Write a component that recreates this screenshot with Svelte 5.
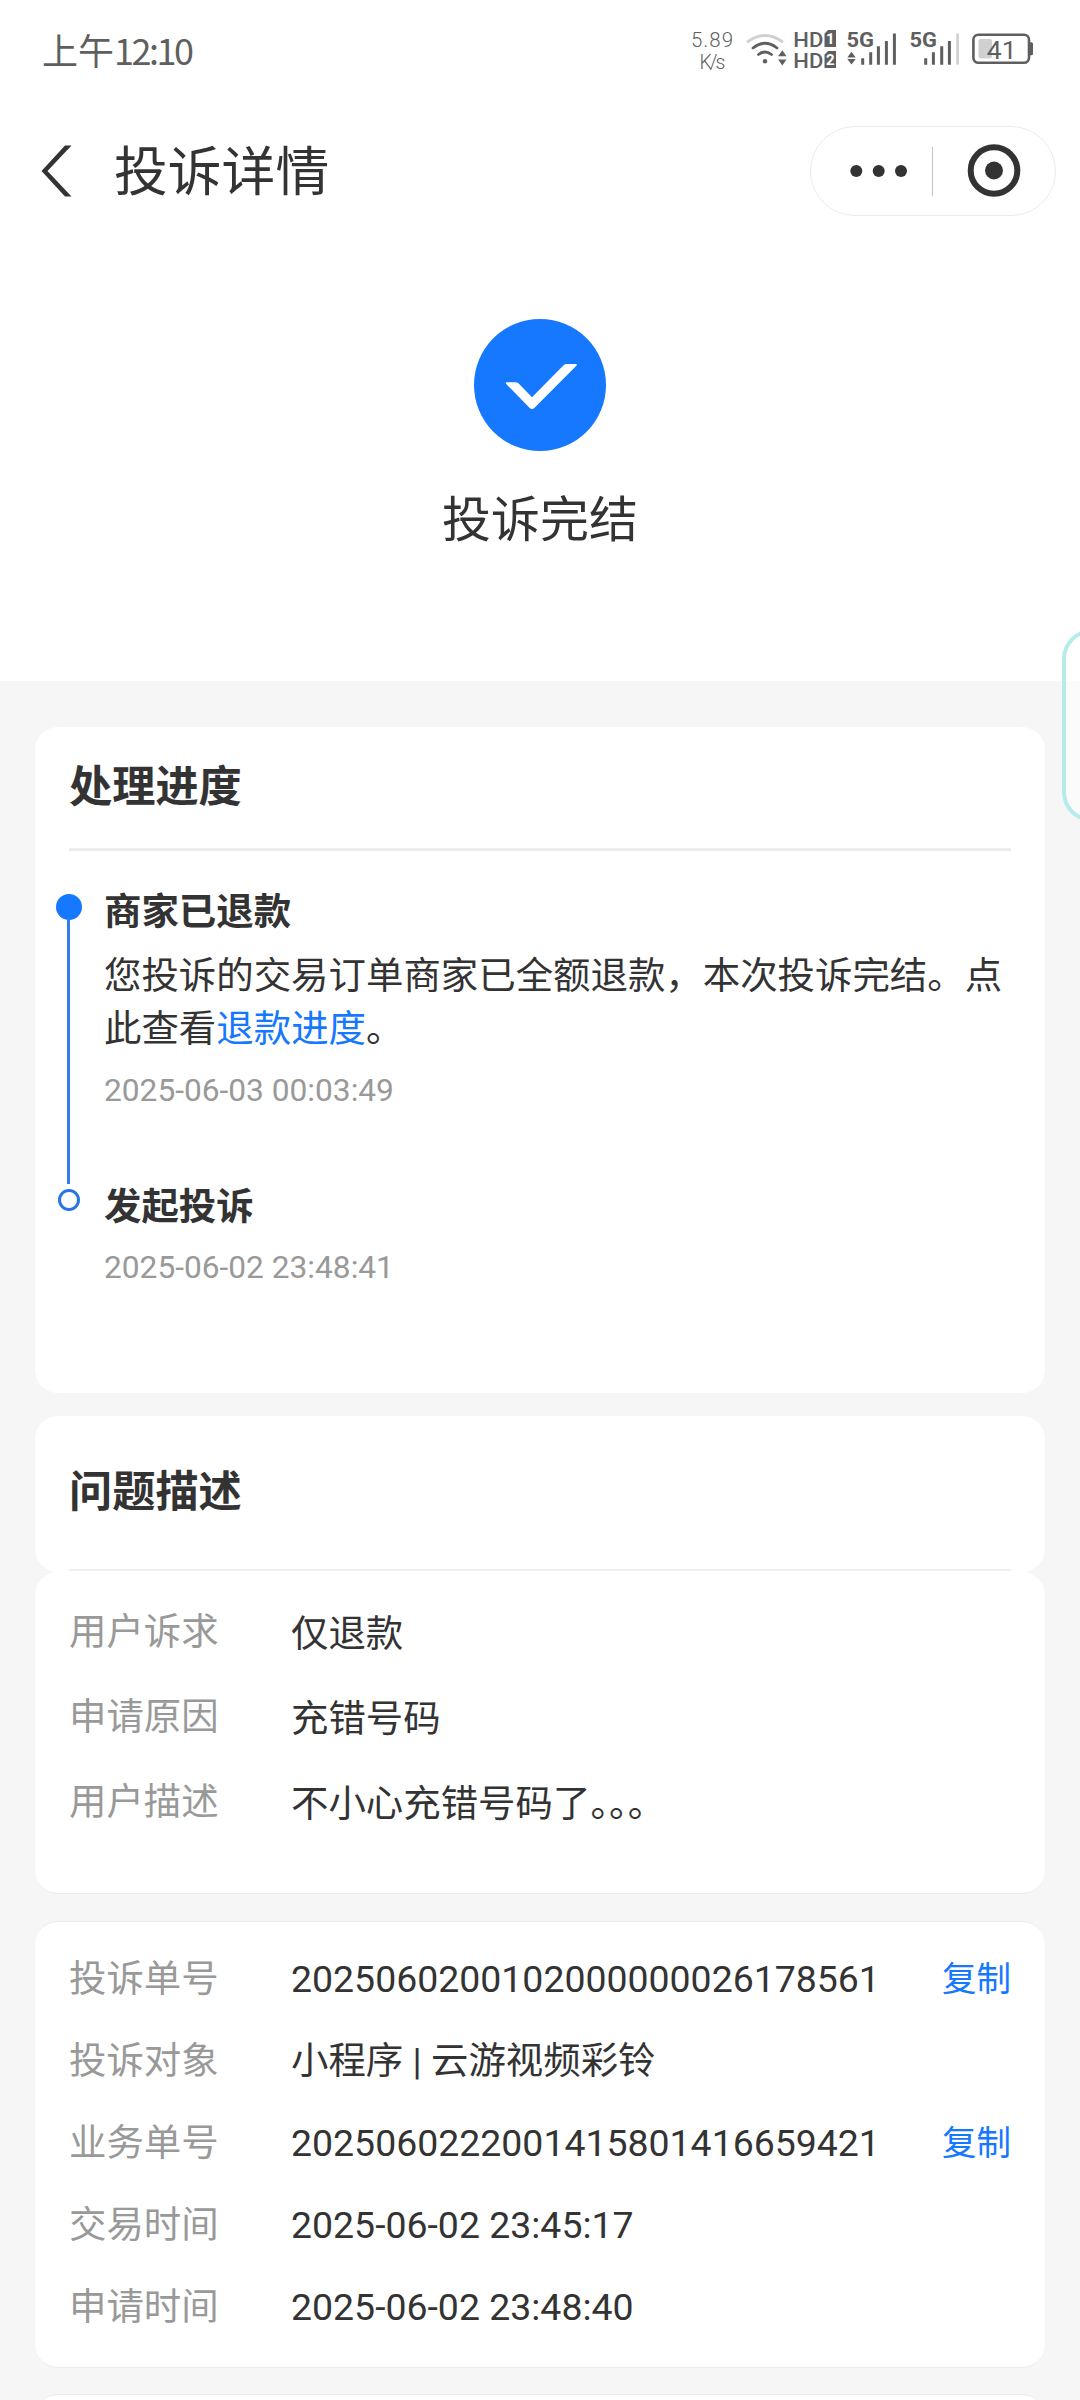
<script lang="ts">
	type Row = { label: string; value: string; copy?: boolean };

	const problem: Row[] = [
		{ label: '用户诉求', value: '仅退款' },
		{ label: '申请原因', value: '充错号码' },
		{ label: '用户描述', value: '不小心充错号码了。。。' }
	];

	const order: Row[] = [
		{ label: '投诉单号', value: '2025060200102000000026178561', copy: true },
		{ label: '投诉对象', value: '小程序 | 云游视频彩铃' },
		{ label: '业务单号', value: '2025060222001415801416659421', copy: true },
		{ label: '交易时间', value: '2025-06-02 23:45:17' },
		{ label: '申请时间', value: '2025-06-02 23:48:40' }
	];

	function copyText(text: string) {
		navigator.clipboard?.writeText(text);
	}
</script>

<div class="page">
	<header class="top">
		<div class="status-bar">
			<div class="clock">上午<span>12:10</span></div>
			<svg class="status-icons" width="350" height="50" viewBox="690 25 350 50" fill="#5f5f5f">
				<g class="speed">
					<text x="691" y="47.2" font-size="20.5" textLength="42">5.89</text>
					<text x="699.5" y="68.5" font-size="19.5" textLength="26">K/s</text>
				</g>

				<!-- wifi -->
				<g fill="none" stroke="#5f5f5f" stroke-width="2.8" stroke-linecap="round">
					<path d="M748 41.5Q765 29.5 782 41.5" stroke="#d0d0d0" />
					<path d="M753 48Q765 38.5 777 48" />
					<path d="M758.5 54.5Q765 49.5 771.5 54.5" />
				</g>
				<circle cx="765" cy="61.3" r="2.2" />
				<path d="M782.3 50.3l4.2 6h-8.4zM782.3 65.5l4.2-6h-8.4z" />

				<!-- dual sim HD -->
				<g font-size="20.5" class="hd">
					<text x="793.3" y="47" textLength="30" lengthAdjust="spacingAndGlyphs">HD</text>
					<text x="793.3" y="68.3" textLength="30" lengthAdjust="spacingAndGlyphs">HD</text>
				</g>
				<path d="M828 30h8v17h-11.5v-13.5zM828 51h8v17h-11.5v-13.5z" />
				<g fill="#fff" font-size="15" font-weight="700" class="latin">
					<text x="826" y="44">1</text>
					<text x="826" y="65">2</text>
				</g>

				<g font-size="20.5" font-weight="700" class="latin">
					<text x="846.5" y="47" textLength="27.5" lengthAdjust="spacingAndGlyphs">5G</text>
					<text x="909.5" y="47" textLength="27.5" lengthAdjust="spacingAndGlyphs">5G</text>
				</g>
				<path d="M851.5 51.8l4.2 5.6h-8.4zM851.5 64.6l4.2-5.6h-8.4z" />
				<path
					d="M862.7 58.3v6.4M870.7 52.3v12.4M878.4 46.3v18.4M886.4 41v23.7M894.4 33.5v31.2M925.7 58.3v6.4M933.4 52.3v12.4M941.7 46.3v18.4M949.4 41v23.7"
					stroke="#5f5f5f"
					stroke-width="3"
				/>
				<path d="M957.6 33.5v31.2" stroke="#d0d0d0" stroke-width="2.6" />

				<!-- battery -->
				<rect x="978.5" y="39" width="13.5" height="19.5" rx="2" fill="#d0d0d0" />
				<rect x="973.4" y="34.7" width="55.6" height="28" rx="5" fill="none" stroke="#5f5f5f" stroke-width="2.6" />
				<path d="M1030 42.3h1.5q1.5 0 1.5 1.5v10q0 1.5-1.5 1.5h-1.5z" />
				<text x="986.8" y="58.8" font-size="26.5" class="latin">41</text>
			</svg>
		</div>

		<nav class="nav-bar">
			<button class="back" aria-label="返回">
				<svg width="32" height="54" viewBox="0 0 32 54">
					<path d="M24 1.5h6.5L6.5 27l24 25.5H24L.5 27z" fill="#333" />
				</svg>
			</button>
			<h1>投诉详情</h1>
			<div class="capsule">
				<button aria-label="更多">
					<svg width="60" height="54" viewBox="0 0 60 54" fill="#333">
						<circle cx="7.3" cy="27" r="6" />
						<circle cx="29.7" cy="27" r="6" />
						<circle cx="52" cy="27" r="6" />
					</svg>
				</button>
				<i></i>
				<button aria-label="关闭">
					<svg width="54" height="54" viewBox="0 0 54 54">
						<circle cx="27" cy="26.5" r="23.3" fill="none" stroke="#333" stroke-width="6" />
						<circle cx="27" cy="26.5" r="9" fill="#333" />
					</svg>
				</button>
			</div>
		</nav>

		<div class="result">
			<svg width="132" height="132" viewBox="0 0 132 132">
				<circle cx="66" cy="66" r="66" fill="#1677ff" />
				<path
					d="M32.5 63.2h9q2 0 3.2 1.3L58 78.3 89.6 46.2q1.2-1.2 3-1.2h9.4q1.6.4.4 1.8L60.3 89q-2.3 2-4.6 0L32 64.8q-.8-1.2.5-1.6z"
					fill="#fff"
				/>
			</svg>
			<p>投诉完结</p>
		</div>
	</header>

	<main>
		<section class="card progress">
			<h2>处理进度</h2>
			<ol class="timeline">
				<li>
					<div class="marker">
						<span class="dot"></span>
						<span class="line"></span>
					</div>
					<div class="step">
						<h3>商家已退款</h3>
						<p>您投诉的交易订单商家已全额退款，本次投诉完结。点此查看<a href="#refund">退款进度</a>。</p>
						<time>2025-06-03 00:03:49</time>
					</div>
				</li>
				<li>
					<div class="marker">
						<span class="ring"></span>
					</div>
					<div class="step">
						<h3>发起投诉</h3>
						<time>2025-06-02 23:48:41</time>
					</div>
				</li>
			</ol>
		</section>

		<section class="card problem-title">
			<h2>问题描述</h2>
		</section>

		<section class="card problem">
			{#each problem as row}
				<div class="row">
					<span class="label">{row.label}</span>
					<span class="value">{row.value}</span>
				</div>
			{/each}
		</section>

		<section class="card order">
			{#each order as row}
				<div class="row">
					<span class="label">{row.label}</span>
					<span class="value">{row.value}</span>
					{#if row.copy}
						<button class="copy" onclick={() => copyText(row.value)}>复制</button>
					{/if}
				</div>
			{/each}
		</section>

		<section class="card next"></section>
	</main>

	<div class="edge-handle"></div>
</div>

<style>
	:global(body) {
		margin: 0;
	}

	.page {
		position: relative;
		width: 1080px;
		height: 2400px;
		overflow: hidden;
		background: #f6f6f6;
		color: #333;
		font-family: Roboto, 'Noto Sans CJK SC', sans-serif;
	}

	h1,
	h2,
	h3,
	p,
	ol {
		margin: 0;
		padding: 0;
	}

	button {
		display: flex;
		padding: 0;
		border: 0;
		background: none;
		font-family: inherit;
		cursor: pointer;
	}

	svg {
		display: block;
	}

	.top {
		height: 681px;
		background: #fff;
	}

	.status-bar {
		display: flex;
		align-items: flex-start;
		justify-content: space-between;
		height: 75px;
		padding: 25px 40px 0 42px;
	}

	.clock {
		color: #5f5f5f;
		font-family: 'Noto Sans CJK SC', sans-serif;
		font-size: 36px;
		line-height: 48px;
	}

	.clock span {
		letter-spacing: -2.5px;
	}

	.speed {
		font-family: Roboto, sans-serif;
		font-weight: 300;
	}

	.hd {
		font-family: Roboto, sans-serif;
		font-weight: 500;
	}

	.latin {
		font-family: Roboto, sans-serif;
	}

	.nav-bar {
		display: flex;
		align-items: center;
		height: 142px;
		padding: 0 24px 0 41px;
	}

	.nav-bar h1 {
		flex: 1;
		margin-left: 41px;
		padding-top: 3px;
		font-size: 53.8px;
		font-weight: 400;
		line-height: 78px;
	}

	.capsule {
		display: flex;
		align-items: center;
		box-sizing: border-box;
		width: 246px;
		height: 90px;
		padding: 0 34px 0 38px;
		border: 1px solid #ebebeb;
		border-radius: 45px;
	}

	.capsule i {
		width: 1px;
		height: 49px;
		margin: 0 34px 0 23px;
		background: #c4c4c4;
	}

	.result {
		display: flex;
		flex-direction: column;
		align-items: center;
		padding-top: 77px;
	}

	.result p {
		margin-top: 36px;
		font-size: 48.96px;
		line-height: 68px;
	}

	main {
		padding: 46px 35px 0;
	}

	.card {
		box-sizing: border-box;
		padding: 0 34px;
		border-radius: 23px;
		background: #fff;
	}

	.card h2 {
		font-size: 43.2px;
		font-weight: 700;
	}

	.progress {
		height: 666px;
	}

	.progress h2 {
		line-height: 121px;
		border-bottom: 3px solid #ececec;
	}

	.timeline {
		padding-top: 34px;
		margin-left: -13px;
		list-style: none;
	}

	.timeline li {
		display: flex;
		gap: 22px;
	}

	.marker {
		display: flex;
		flex-direction: column;
		align-items: center;
		width: 26px;
		padding-top: 9px;
	}

	.dot {
		width: 26px;
		height: 26px;
		border-radius: 50%;
		background: #1677ff;
	}

	.line {
		flex: 1;
		width: 3px;
		margin: 0 1px -4px 0;
		background: #3080e8;
	}

	.ring {
		box-sizing: border-box;
		width: 22px;
		height: 22px;
		border: 3px solid #2a74e6;
		border-radius: 50%;
	}

	.step {
		flex: 1;
		padding-bottom: 67px;
	}

	.step h3 {
		padding-top: 1px;
		font-size: 37.44px;
		font-weight: 700;
		line-height: 52px;
	}

	.step p {
		margin-top: 12px;
		font-size: 37.44px;
		line-height: 53px;
	}

	.step a {
		color: #1677ff;
		text-decoration: none;
	}

	.step time {
		display: block;
		margin-top: 13px;
		color: #999;
		font-size: 31.68px;
		line-height: 44px;
	}

	.problem-title {
		height: 156px;
		margin-top: 23px;
	}

	.problem-title h2 {
		line-height: 153px;
		border-bottom: 2px solid #f0f0f0;
	}

	.problem {
		height: 322px;
		padding-top: 19px;
		border-bottom: 1px solid #ececec;
	}

	.row {
		display: flex;
		align-items: center;
		font-size: 37.44px;
		line-height: 52px;
	}

	.label {
		width: 222px;
		color: #999;
	}

	.value {
		flex: 1;
	}

	.problem .row {
		height: 85px;
	}

	.problem .label {
		padding-bottom: 4px;
	}

	.problem .value {
		font-feature-settings: 'halt';
	}

	.order {
		height: 447px;
		margin-top: 27px;
		padding-top: 16px;
		border-top: 1px solid #ececec;
		border-bottom: 1px solid #ececec;
	}

	.order .row {
		height: 82px;
	}

	.copy {
		color: #1677ff;
		font-size: 34.56px;
		line-height: 50px;
	}

	.next {
		height: 120px;
		margin-top: 26px;
		border-top: 1px solid #ececec;
	}

	/* half-hidden side panel handle of the system */
	.edge-handle {
		position: absolute;
		top: 629px;
		left: 1062px;
		box-sizing: border-box;
		width: 60px;
		height: 193px;
		border: 4px solid #b5ece9;
		border-radius: 32px;
		background: rgba(255, 255, 255, 0.6);
	}
</style>
